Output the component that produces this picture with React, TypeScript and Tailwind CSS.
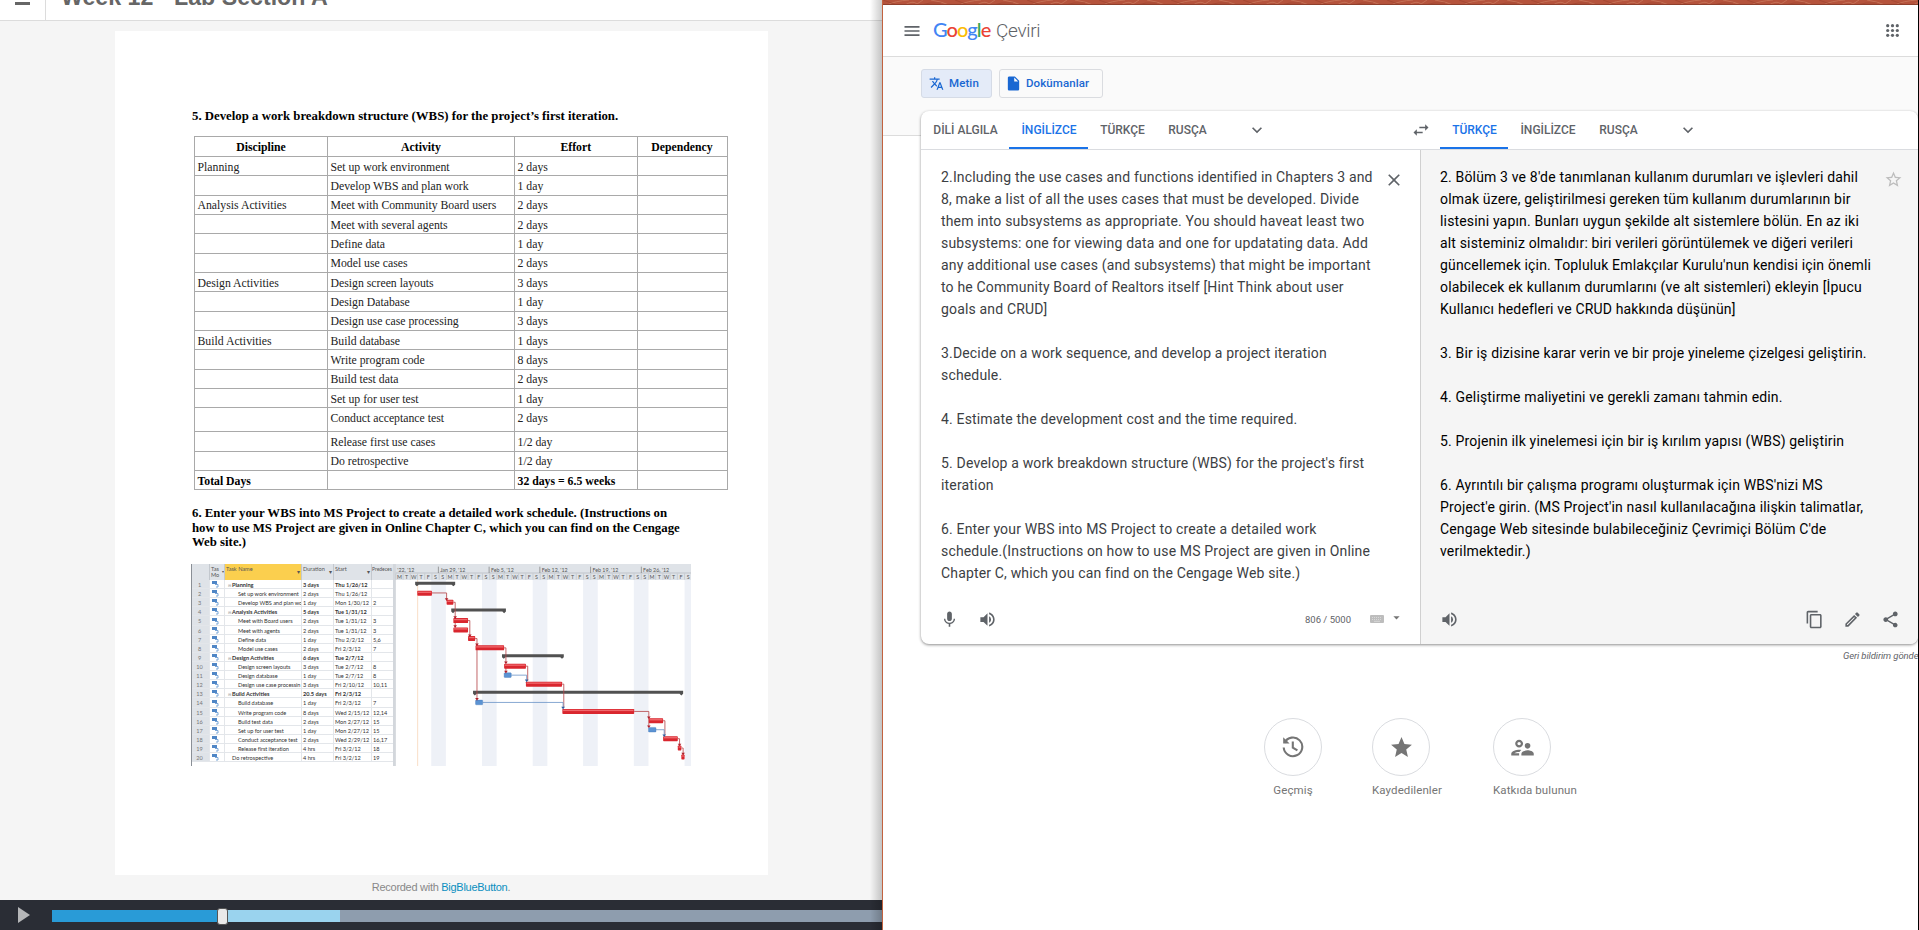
import React from "react";
import {
  MdTranslate, MdInsertDriveFile, MdVolumeUp, MdMic, MdContentCopy, MdOutlineEdit, MdShare, MdStar,
  MdOutlineSupervisorAccount, MdArrowDropDown, MdStarBorder, MdClose, MdMenu, MdSwapHoriz, MdKeyboardArrowDown,
} from "react-icons/md";

const wbs: [string, string, string][] = [
  ["Planning", "Set up work environment", "2 days"],
  ["", "Develop WBS and plan work", "1 day"],
  ["Analysis Activities", "Meet with Community Board users", "2 days"],
  ["", "Meet with several agents", "2 days"],
  ["", "Define data", "1 day"],
  ["", "Model use cases", "2 days"],
  ["Design Activities", "Design screen layouts", "3 days"],
  ["", "Design Database", "1 day"],
  ["", "Design use case processing", "3 days"],
  ["Build Activities", "Build database", "1 days"],
  ["", "Write program code", "8 days"],
  ["", "Build test data", "2 days"],
  ["", "Set up for user test", "1 day"],
  ["", "Conduct acceptance test", "2 days"],
  ["", "Release first use cases", "1/2 day"],
  ["", "Do retrospective", "1/2 day"],
];

const tasks: [number, string, string, string, string][] = [
  [0, "Planning", "3 days", "Thu 1/26/12", ""],
  [1, "Set up work environment", "2 days", "Thu 1/26/12", ""],
  [1, "Develop WBS and plan wo", "1 day", "Mon 1/30/12", "2"],
  [0, "Analysis Activities", "5 days", "Tue 1/31/12", ""],
  [1, "Meet with Board users", "2 days", "Tue 1/31/12", "3"],
  [1, "Meet with agents", "2 days", "Tue 1/31/12", "3"],
  [1, "Define data", "1 day", "Thu 2/2/12", "5,6"],
  [1, "Model use cases", "2 days", "Fri 2/3/12", "7"],
  [0, "Design Activities", "6 days", "Tue 2/7/12", ""],
  [1, "Design screen layouts", "3 days", "Tue 2/7/12", "8"],
  [1, "Design database", "1 day", "Tue 2/7/12", "8"],
  [1, "Design use case processin", "3 days", "Fri 2/10/12", "10,11"],
  [0, "Build Activities", "20.5 days", "Fri 2/3/12", ""],
  [1, "Build database", "1 day", "Fri 2/3/12", "7"],
  [1, "Write program code", "8 days", "Wed 2/15/12", "12,14"],
  [1, "Build test data", "2 days", "Mon 2/27/12", "15"],
  [1, "Set up for user test", "1 day", "Mon 2/27/12", "15"],
  [1, "Conduct acceptance test", "2 days", "Wed 2/29/12", "16,17"],
  [1, "Release first iteration", "4 hrs", "Fri 3/2/12", "18"],
  [2, "Do retrospective", "4 hrs", "Fri 3/2/12", "19"],
];

const taskCols = "grid grid-cols-[18px_15px_77px_32px_38px_22px]";

function GanttTable() {
  return (
    <div className="w-[202px] shrink-0 overflow-hidden border-l border-[#8a8f96] bg-white font-[Lato,'Noto_Sans',sans-serif] text-[5.6px] text-[#333]">
      <div className={taskCols + " h-[16px] bg-[#dfe3e8] leading-[6px] text-[#555] [&>div]:overflow-hidden [&>div]:border-r [&>div]:border-[#c3c8ce] [&>div]:pt-[2px] [&>div]:whitespace-nowrap"}>
        <div />
        <div className="flex justify-between pl-px"><span>Tas<br />Mo</span><span className="pt-[3px] text-[4px]">▾</span></div>
        <div className="flex justify-between bg-[#fbcf4e] px-px"><span>Task Name</span><span className="pt-[3px]">▾</span></div>
        <div className="flex justify-between px-px"><span>Duration</span><span className="pt-[3px]">▾</span></div>
        <div className="flex justify-between px-px"><span>Start</span><span className="pt-[3px]">▾</span></div>
        <div className="text-[5px]">Predeces</div>
      </div>
      {tasks.map(([level, name, dur, start, pred], i) => (
        <div
          key={name}
          className={taskCols + " h-[9.12px] leading-[9px] [&>div]:overflow-hidden [&>div]:whitespace-nowrap [&>div]:border-r [&>div]:border-b [&>div]:border-[#e3e6ea] " + (level === 0 ? "font-bold" : "")}
        >
          <div className="bg-[#dfe3e8] pr-[2px] text-center font-normal text-[#777]">{i + 1}</div>
          <div className="flex items-center pl-[2px]">
            <svg width="7" height="8" viewBox="0 0 7 8"><path d="M0 1h5v3H0z" fill="#4f86c6" /><path d="M3 4.5h3v2.5H4" fill="none" stroke="#7ba7d8" strokeWidth="1" /></svg>
          </div>
          <div className={level === 1 ? "pl-[13px] tracking-[-0.05px]" : level === 0 ? "pl-[2.5px]" : "pl-[7px]"}>
            {level === 0 && <span className="inline-block w-[4.5px] text-[4px] font-normal text-[#999]">⊟</span>}{name}
          </div>
          <div className="pl-px">{dur}</div>
          <div className="pl-px">{start}</div>
          <div className="pl-px">{pred}</div>
        </div>
      ))}
    </div>
  );
}

const summaryBars = [[658, 770, 280], [759, 912, 361], [901, 1074, 498], [820, 1408, 608]];
const redBars = [[664, 705, 309], [746, 765, 336], [765, 806, 391], [765, 806, 419], [806, 826, 445], [827, 907, 473], [907, 968, 528], [968, 1069, 582], [1070, 1271, 664], [1312, 1352, 692], [1352, 1393, 746], [1393, 1403, 774], [1403, 1412, 801]];
const blueBars = [[907, 927, 555], [827, 847, 637], [1311, 1332, 719]];
const weeks: [number, string][] = [[606, "'22, '12"], [726, "Jan 29, '12"], [868, "Feb 5, '12"], [1010, "Feb 12, '12"], [1152, "Feb 19, '12"], [1294, "Feb 26, '12"]];
const redLinks = ["M705 308H746V327", "M765 336H770V380M770 391V408", "M806 391H811V436", "M826 445H831V626", "M907 473H912V517M912 528V545", "M968 528H973V573", "M1069 582H1074V652", "M1271 664H1312V682V710", "M1352 692H1357V736", "M1393 746H1398V766", "M1403 774H1408V794"];
const arrowHeads = [[746, 328], [770, 382], [770, 409], [811, 437], [831, 464], [831, 628], [912, 518], [912, 546], [1312, 683], [1312, 710], [1398, 765], [1408, 792]];
const blueHeads = [[970, 572], [1072, 654], [1355, 737]];

function GanttChart() {
  return (
    <svg className="h-[202px] w-[298px] shrink-0" viewBox="596 221 834 607" preserveAspectRatio="none" fontFamily="Lato, sans-serif">
      <rect x="596" y="221" width="834" height="607" fill="#fff" />
      {[703, 845, 987, 1128, 1270, 1412].map((x) => <rect key={x} x={x} y="268" width={x === 1412 ? 18 : 41} height="560" fill="#eef1f7" />)}
      <rect x="596" y="221" width="834" height="48" fill="#dfe3e8" />
      <rect x="596" y="221" width="8" height="607" fill="#d3d7dc" />
      <path d="M604 248H1430" stroke="#b3b8be" strokeWidth="2" />
      {weeks.map(([x, label]) => (
        <g key={x}>
          {x > 606 && <path d={`M${x - 3} 229V248`} stroke="#777" strokeWidth="2" />}
          <text x={x + 2} y="245" fontSize="15" fill="#555">{label}</text>
        </g>
      ))}
      {"MTWTFSSMTWTFSSMTWTFSSMTWTFSSMTWTFSSMTWTFS".split("").map((d, i) => (
        <g key={i}>
          <text x={614 + i * 20.2} y="265" fontSize="15" fill="#555" textAnchor="middle">{d}</text>
          <path d={`M${604 + i * 20.2} 250V268`} stroke="#b3b8be" strokeWidth="1.5" />
        </g>
      ))}
      <path d="M665 269V828" stroke="#f6cfae" strokeWidth="2" />
      {summaryBars.map(([a, b, y]) => (
        <path key={y} d={`M${a} ${y - 6}H${b}V${y + 3}l-5 5l-5 -5H${a + 10}l-5 5l-5 -5Z`} fill="#515151" />
      ))}
      {redLinks.map((d) => <path key={d} d={d} fill="none" stroke="#b5464a" strokeWidth="2.4" />)}
      <path d="M927 555H970V569M847 637H1072V652M1332 719H1355V735" fill="none" stroke="#6f97c8" strokeWidth="2.4" />
      {redBars.map(([a, b, y]) => (
        <g key={`${a}-${y}`}>
          <rect x={a} y={y - 7.5} width={b - a} height="15" rx="2" fill="#d9262e" />
          <rect x={a + 2} y={y - 5} width={b - a - 4} height="4" fill="#f0686c" />
        </g>
      ))}
      {blueBars.map(([a, b, y]) => <rect key={y} x={a} y={y - 7} width={b - a} height="14" rx="2" fill="#5b93d3" stroke="#3d72b4" />)}
      {arrowHeads.map(([x, y]) => <path key={`${x}-${y}`} d={`M${x - 5} ${y - 4}h10l-5 8z`} fill="#b01f2a" />)}
      {blueHeads.map(([x, y]) => <path key={`${x}-${y}`} d={`M${x - 5} ${y - 4}h10l-5 8z`} fill="#2f5f9f" />)}
    </svg>
  );
}

function Recording() {
  const cell = "overflow-hidden whitespace-nowrap border-r border-b border-[#a9a9a9] pt-[1.6px] pl-[2.5px] leading-[18px]";
  const cols = "grid grid-cols-[133px_187px_122.5px_90px]";
  return (
    <section className="relative flex h-full w-[882px] shrink-0 flex-col overflow-hidden bg-[#f5f5f5] font-['Liberation_Sans',Arial,sans-serif]">
      <header className="flex h-[21px] shrink-0 border-b border-[#dcdcdc] bg-white">
        <div className="flex w-[46px] justify-center border-r border-[#dcdcdc]">
          <div className="mt-[2px] -ml-px h-[3px] w-[15px] bg-[#666]" />
        </div>
        <h1 className="-mt-[17px] ml-[15px] text-[23.2px] leading-[28px] font-bold whitespace-nowrap text-[#666]">Week 12 - Lab Section A</h1>
      </header>
      <main className="mt-[10px] ml-[115px] h-[844px] w-[653px] shrink-0 bg-white pl-[77px] font-['Liberation_Serif','Times_New_Roman',serif] text-[12.8px] text-[#222]">
        <h2 className="pt-[77px] leading-[16px] font-bold whitespace-nowrap text-black">5. Develop a work breakdown structure (WBS) for the project’s first iteration.</h2>
        <div className="mt-[12px] ml-[2px] w-[533.5px] border-t border-l border-[#a9a9a9] text-[11.75px]">
          <div className={cols + " h-[20px] text-center font-bold text-black"}>
            {["Discipline", "Activity", "Effort", "Dependency"].map((h) => <div key={h} className="overflow-hidden border-r border-b border-[#a9a9a9] pt-[2px] leading-[18px] whitespace-nowrap">{h}</div>)}
          </div>
          {wbs.map(([a, b, c]) => (
            <div key={b} className={cols + (b.startsWith("Conduct") ? " h-[24px]" : " h-[19.33px]")}>
              <div className={cell}>{a}</div><div className={cell}>{b}</div><div className={cell}>{c}</div><div className={cell} />
            </div>
          ))}
          <div className={cols + " h-[19.33px] font-bold text-black"}>
            <div className={cell}>Total Days</div><div className={cell} /><div className={cell}>32 days = 6.5 weeks</div><div className={cell} />
          </div>
        </div>
        <p className="mt-[16px] leading-[14.6px] font-bold whitespace-nowrap text-black">
          6. Enter your WBS into MS Project to create a detailed work schedule. (Instructions on<br />how to use MS Project are given in Online Chapter C, which you can find on the Cengage<br />Web site.)
        </p>
        <div className="mt-[14px] -ml-px flex h-[202px] w-[500px] overflow-hidden">
          <GanttTable />
          <GanttChart />
        </div>
      </main>
      <p className="mt-[5px] h-[20px] text-center text-[11px] leading-[14px] tracking-[-0.28px] text-[#888]">Recorded with <span className="text-[#0a8fc0]">BigBlueButton</span>.</p>
      <footer className="flex h-[30px] shrink-0 items-center bg-[#2a2d35]">
        <svg className="ml-[18px] -mt-[1px]" width="12" height="16" viewBox="0 0 12 16"><path d="M0 0l12 8L0 16z" fill="#b5b6b8" /></svg>
        <div className="mt-[2px] ml-[22px] flex h-[12px] flex-1 items-center bg-[#8e9dae]">
          <div className="h-full w-[165px] bg-[#299bd7]" />
          <div className="z-10 h-[17px] w-[11px] shrink-0 rounded-[3px] border border-[#555] bg-[#e9e9e9]" />
          <div className="h-full w-[112px] bg-[#9ad3ee]" />
        </div>
      </footer>
      <div className="absolute top-0 right-0 h-full w-[12px] bg-linear-to-r from-black/0 to-black/20" />
    </section>
  );
}

function Tab({ label, active = false, className }: { label: string; active?: boolean; className: string }) {
  return (
    <div className={"flex h-full items-center justify-center border-b-2 pt-[2px] pl-px " + (active ? "border-[#1a73e8] text-[#1a73e8] " : "border-transparent text-[#5f6368] ") + className}>{label}</div>
  );
}

const AppsIcon = () => (
  <svg className="ml-auto" width="13" height="13" viewBox="0 0 13 13" fill="#5f6368">
    {[1.7, 6.5, 11.3].map((y) => [1.7, 6.5, 11.3].map((x) => <circle key={`${x}-${y}`} cx={x} cy={y} r="1.6" />))}
  </svg>
);

const KeyboardIcon = () => (
  <svg className="ml-[18px]" width="14" height="8" viewBox="0 0 14 8">
    <rect width="14" height="8" rx="1" fill="#bdbdbd" />
    <path d="M2 2.5h10M2 4.5h10" stroke="#d8d8d8" strokeDasharray="1 1" />
    <path d="M4 6.3h6" stroke="#d8d8d8" />
  </svg>
);

const HistoryIcon = () => (
  <svg width="22" height="22" viewBox="0 0 22 22" fill="none" stroke="#757575" strokeWidth="2.1">
    <path d="M2.6 6.8A9.3 9.3 0 1 1 1.7 11.5" />
    <path d="M10.8 5.5V11.6L15.4 14.4" />
    <path d="M1.2 1.2V7.6H7.6Z" fill="#757575" stroke="none" />
  </svg>
);

const source = `2.Including the use cases and functions identified in Chapters 3 and
8, make a list of all the uses cases that must be developed. Divide
them into subsystems as appropriate. You should haveat least two
subsystems: one for viewing data and one for updatating data. Add
any additional use cases (and subsystems) that might be important
to he Community Board of Realtors itself [Hint Think about user
goals and CRUD]

3.Decide on a work sequence, and develop a project iteration
schedule.

4. Estimate the development cost and the time required.

5. Develop a work breakdown structure (WBS) for the project's first
iteration

6. Enter your WBS into MS Project to create a detailed work
schedule.(Instructions on how to use MS Project are given in Online
Chapter C, which you can find on the Cengage Web site.)`;

const target = `2. Bölüm 3 ve 8'de tanımlanan kullanım durumları ve işlevleri dahil
olmak üzere, geliştirilmesi gereken tüm kullanım durumlarının bir
listesini yapın. Bunları uygun şekilde alt sistemlere bölün. En az iki
alt sisteminiz olmalıdır: biri verileri görüntülemek ve diğeri verileri
güncellemek için. Topluluk Emlakçılar Kurulu'nun kendisi için önemli
olabilecek ek kullanım durumlarını (ve alt sistemleri) ekleyin [İpucu
Kullanıcı hedefleri ve CRUD hakkında düşünün]

3. Bir iş dizisine karar verin ve bir proje yineleme çizelgesi geliştirin.

4. Geliştirme maliyetini ve gerekli zamanı tahmin edin.

5. Projenin ilk yinelemesi için bir iş kırılım yapısı (WBS) geliştirin

6. Ayrıntılı bir çalışma programı oluşturmak için WBS'nizi MS
Project'e girin. (MS Project'in nasıl kullanılacağına ilişkin talimatlar,
Cengage Web sitesinde bulabileceğiniz Çevrimiçi Bölüm C'de
verilmektedir.)`;

function Translate() {
  return (
    <section className="flex h-full min-w-0 flex-1 flex-col overflow-hidden border-l border-[#c2623f] bg-white font-[Roboto,sans-serif] text-[#5f6368]">
      <div className="flex h-[5px] shrink-0 overflow-hidden border-b border-[#8f3f2c] bg-[#b5533c]">
        {Array.from({ length: 15 }, (_, i) => (
          <svg key={i} className="h-[5px] w-[72px] shrink-0" viewBox="0 0 72 5" fill="none">
            <path d="M4 5Q12 1 26 0M22 5Q30 0 34 4L40 0M48 0Q60 2 66 5" stroke="#cf8468" strokeWidth="0.6" />
            <path d="M0 0Q8 3 14 5M38 5Q46 2 58 3" stroke="#9b422e" strokeWidth="0.6" />
          </svg>
        ))}
      </div>
      <header className="flex h-[52px] shrink-0 items-center border-b border-[#dcdcdc] pr-[19px] pl-[19px]">
        <MdMenu className="h-[20px] w-[20px]" />
        <div className="-mt-px ml-[11px] flex items-baseline text-[20px]">
          <span className="w-[63px] font-[Lato,sans-serif] font-medium tracking-[-0.95px]">
            <span className="text-[#4285f4]">G</span><span className="text-[#ea4335]">o</span><span className="text-[#fbbc05]">o</span><span className="text-[#4285f4]">g</span><span className="text-[#34a853]">l</span><span className="text-[#ea4335]">e</span>
          </span>
          <span className="text-[19px] font-light tracking-[-0.3px]">Çeviri</span>
        </div>
        <AppsIcon />
      </header>
      <div className="flex min-h-0 flex-1 flex-col bg-[linear-gradient(#fafafa_78px,#dcdcdc_78px,#dcdcdc_79px,#fff_79px)] pt-[12px] pl-[38px]">
        <nav className="flex h-[29px] shrink-0 gap-[7px] text-[11.5px] font-medium tracking-[0.1px] text-[#1967d2]">
          <button className="flex w-[71px] items-center gap-[5px] rounded-[3px] border border-[#d5dbe6] bg-[#e4ebf8] pl-[7px]"><MdTranslate className="h-[15px] w-[15px]" />Metin</button>
          <button className="flex w-[104px] items-center gap-[4px] rounded-[3px] border border-[#dadce0] pl-[5px]"><MdInsertDriveFile className="h-[17px] w-[17px]" />Dokümanlar</button>
        </nav>
        <article className="mt-[13px] flex h-[533px] shrink-0 flex-col overflow-hidden rounded-lg bg-white shadow-[0_1px_3px_rgba(0,0,0,0.45)]">
          <div className="flex h-[39px] shrink-0 border-b border-[#dadce0] text-[12px] font-medium">
            <Tab label="DİLİ ALGILA" className="w-[88px]" />
            <Tab label="İNGİLİZCE" active className="w-[79px]" />
            <Tab label="TÜRKÇE" className="w-[68px]" />
            <Tab label="RUSÇA" className="w-[62px]" />
            <MdKeyboardArrowDown className="mt-[9px] ml-[29px] h-[20px] w-[20px]" />
            <MdSwapHoriz className="mt-[9px] ml-[144px] h-[20px] w-[20px]" />
            <Tab label="TÜRKÇE" active className="ml-[9px] w-[68px]" />
            <Tab label="İNGİLİZCE" className="w-[79px]" />
            <Tab label="RUSÇA" className="w-[62px]" />
            <MdKeyboardArrowDown className="mt-[9px] ml-[29px] h-[20px] w-[20px]" />
          </div>
          <div className="flex min-h-0 flex-1">
            <div className="flex w-[500px] shrink-0 flex-col border-r border-[#d0d0d0]">
              <div className="flex flex-1 pt-[16px] pl-[20px]">
                <p className="w-[443px] text-[14px] leading-[22px] tracking-[0.165px] whitespace-pre text-[#3c4043]">{source}</p>
                <MdClose className="mt-[4px] h-[20px] w-[20px] text-[#5f6368]" />
              </div>
              <div className="flex h-[50px] items-center pl-[19px]">
                <MdMic className="h-[19px] w-[19px]" />
                <MdVolumeUp className="ml-[19px] h-[19px] w-[19px]" />
                <span className="ml-[308px] w-[47px] pt-[2px] text-[9.5px] whitespace-nowrap">806 / 5000</span>
                <KeyboardIcon />
                <MdArrowDropDown className="ml-[5px] -mt-[3px] h-[15px] w-[15px] text-[#757575]" />
              </div>
            </div>
            <div className="flex flex-1 flex-col bg-[#f5f5f5]">
              <div className="flex flex-1 pt-[16px] pl-[19px]">
                <p className="w-[444px] text-[14px] leading-[22px] tracking-[0.165px] whitespace-pre text-black">{target}</p>
                <MdStarBorder className="mt-[4px] h-[19px] w-[19px] text-[#bdbdbd]" />
              </div>
              <div className="flex h-[50px] items-center pr-[18px] pl-[19px]">
                <MdVolumeUp className="h-[19px] w-[19px]" />
                <MdContentCopy className="ml-auto h-[19px] w-[19px]" />
                <MdOutlineEdit className="ml-[19px] h-[19px] w-[19px]" />
                <MdShare className="ml-[19px] h-[19px] w-[19px]" />
              </div>
            </div>
          </div>
        </article>
        <p className="mt-[5px] ml-[922px] text-[9.5px] leading-[14px] tracking-[-0.1px] whitespace-nowrap italic">Geri bildirim gönder</p>
        <div className="mt-[55px] ml-[343px] flex text-[11.5px] tracking-[0.1px] text-[#757575] [&_i]:flex [&_i]:h-[58px] [&_i]:w-[58px] [&_i]:items-center [&_i]:justify-center [&_i]:rounded-full [&_i]:border [&_i]:border-[#dadce0] [&_span]:mt-[6px] [&_span]:leading-[16px] [&_span]:whitespace-nowrap">
          <div className="flex w-[108px] flex-col"><i><HistoryIcon /></i><span className="w-[58px] text-center">Geçmiş</span></div>
          <div className="flex w-[121px] flex-col"><i><MdStar className="h-[25px] w-[25px]" /></i><span>Kaydedilenler</span></div>
          <div className="flex flex-col"><i><MdOutlineSupervisorAccount className="h-[27px] w-[27px]" /></i><span>Katkıda bulunun</span></div>
        </div>
      </div>
    </section>
  );
}

export default function App() {
  return (
    <div className="flex h-[930px] w-[1919px] overflow-hidden">
      <Recording />
      <Translate />
      <div className="w-px shrink-0 bg-black" />
    </div>
  );
}
